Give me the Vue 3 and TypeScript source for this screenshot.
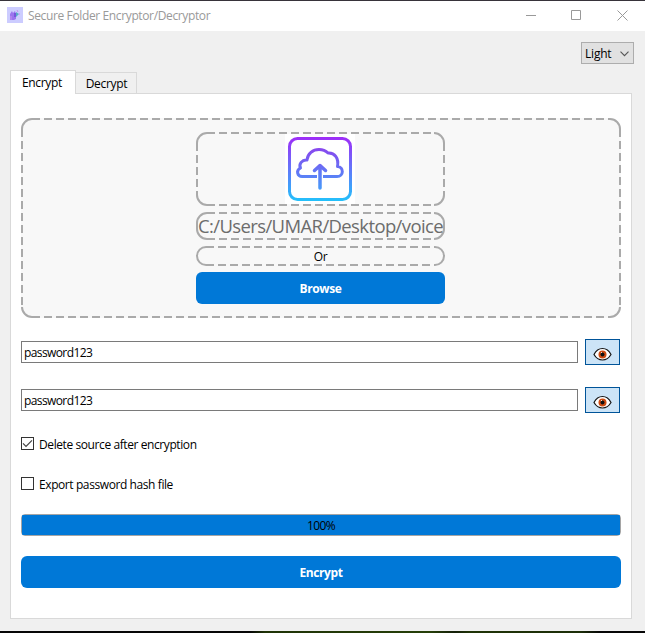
<script setup lang="ts">
import { computed, defineComponent, h, ref } from 'vue'

// Rounded outline whose straight edges are dashed 8/4 and whose corners stay solid.
const DashedOutline = defineComponent({
  props: {
    width: { type: Number, required: true },
    height: { type: Number, required: true },
  },
  setup(props) {
    return () => {
      const w = props.width
      const t = props.height
      const r = Math.min(10, t / 2 - 1)
      const edge = r + 1
      const lines = [
        `M${edge} 1H${w - edge}`,
        `M${edge} ${t - 1}H${w - edge}`,
        `M1 ${edge}V${t - edge}`,
        `M${w - 1} ${edge}V${t - edge}`,
      ]
      const corners =
        `M1 ${edge}A${r} ${r} 0 0 1 ${edge} 1` +
        `M${w - edge} 1A${r} ${r} 0 0 1 ${w - 1} ${edge}` +
        `M${w - 1} ${t - edge}A${r} ${r} 0 0 1 ${w - edge} ${t - 1}` +
        `M${edge} ${t - 1}A${r} ${r} 0 0 1 1 ${t - edge}`
      return h(
        'svg',
        { width: w, height: t, viewBox: `0 0 ${w} ${t}`, fill: 'none', stroke: '#aaaaaa', 'stroke-width': 2 },
        [
          h('path', { d: corners }),
          ...lines.map((d) => h('path', { d, 'stroke-dasharray': '8 4' })),
        ],
      )
    }
  },
})

const tab = ref<'encrypt' | 'decrypt'>('encrypt')
const passwords = ref<string[]>(['password123', 'password123'])
const visible = ref<boolean[]>([true, true])
const options = ref([
  { label: 'Delete source after encryption', checked: true },
  { label: 'Export password hash file', checked: false },
])
const progress = ref(100)
const progressStyle = computed(() => ({ width: `${progress.value}%` }))
</script>

<template>
  <div class="window">
    <header class="titlebar">
      <svg class="app-icon" width="16" height="16" viewBox="0 0 16 16">
        <rect width="16" height="16" fill="#ccccff" />
        <path d="M3 7l2-3 1 2 2-2 1 3v5l-2 1H4l-1-2z" fill="#9c74ee" />
        <path d="M3 9h2v4H3z" fill="#b183ee" />
        <path d="M7 6h2v4H7z" fill="#7658dc" />
        <path d="M9 5l3 2-3 3z" fill="#58aec4" />
        <path d="M10 3l1 2M12 7h1" stroke="#c194ec" />
      </svg>
      <span class="title">Secure Folder Encryptor/Decryptor</span>
      <div class="controls">
        <svg width="11" height="11" viewBox="0 0 11 11"><path d="M0 5.5h10" stroke="#999" /></svg>
        <svg width="11" height="11" viewBox="0 0 11 11"><path d="M.5 .5h9v9h-9z" fill="none" stroke="#999" /></svg>
        <svg width="11" height="11" viewBox="0 0 11 11"><path d="M.5 .5l10 10M10.5 .5l-10 10" fill="none" stroke="#999" /></svg>
      </div>
    </header>

    <div class="toolbar">
      <button class="theme" type="button">
        <span class="theme-label">Light</span>
        <svg width="9" height="6" viewBox="0 0 9 6"><path d="M.5 .7l4 4 4-4" fill="none" stroke="#555" stroke-width="1.1" /></svg>
      </button>
    </div>

    <nav class="tabs">
      <button type="button" class="tab" :class="{ active: tab === 'encrypt' }" @click="tab = 'encrypt'">Encrypt</button>
      <button type="button" class="tab" :class="{ active: tab === 'decrypt' }" @click="tab = 'decrypt'">Decrypt</button>
    </nav>

    <main class="panel">
      <section class="frame drop">
        <DashedOutline class="outline" :width="600" :height="200" />
        <div class="frame picture">
          <DashedOutline class="outline" :width="249" :height="74" />
          <svg class="upload" width="70" height="70" viewBox="0 0 70 70" fill="none">
            <defs>
              <linearGradient id="frameGrad" gradientUnits="userSpaceOnUse" x1="0" y1="3" x2="0" y2="67">
                <stop offset="0" stop-color="#9f2df8" />
                <stop offset="1" stop-color="#23c1fb" />
              </linearGradient>
              <linearGradient id="cloudGrad" gradientUnits="userSpaceOnUse" x1="0" y1="13" x2="0" y2="56">
                <stop offset="0" stop-color="#8a44ee" />
                <stop offset="1" stop-color="#459cfa" />
              </linearGradient>
            </defs>
            <rect width="70" height="70" fill="#fff" />
            <rect x="4.5" y="4.5" width="61" height="61" rx="8" stroke="url(#frameGrad)" stroke-width="3" />
            <g stroke="url(#cloudGrad)" stroke-width="3" stroke-linejoin="round">
              <path d="M32 42.500H17C12.500 42.500 10.500 36.500 15.500 34C13.500 30 17 25.500 22 26C22.500 19.500 28 15.500 34 15.500C38 15.500 41 17 43 19C49.500 18.500 54 24 52.500 32.500C59 33 59 42.500 52 42.500H38" />
              <path d="M35 54V31.500M29.500 36.500L35 31.500L40.500 36.500" stroke-width="3.500" stroke-linecap="round" />
            </g>
          </svg>
        </div>
        <div class="frame path">
          <DashedOutline class="outline" :width="249" :height="28" />
          <span class="path-text">C:/Users/UMAR/Desktop/voice</span>
        </div>
        <div class="frame or">
          <DashedOutline class="outline" :width="249" :height="20" />
          <span class="or-text">Or</span>
        </div>
        <button type="button" class="primary browse">Browse</button>
      </section>

      <div v-for="(_, i) in passwords" :key="i" class="field">
        <input v-model="passwords[i]" class="password" :type="visible[i] ? 'text' : 'password'" />
        <button type="button" class="eye" :class="{ on: visible[i] }" @click="visible[i] = !visible[i]">
          <svg width="19" height="15" viewBox="0 0 19 15">
            <path d="M1 7.500C3 3.500 6 1.500 9.500 1.500S16 3.500 18 7.500C16 11 13 13 9.500 13S3 11 1 7.500Z" fill="#fff" stroke="#151515" stroke-width="1.200" />
            <circle cx="9.500" cy="7.500" r="4" fill="#cf4c12" />
            <circle cx="9.500" cy="7.500" r="2" fill="#111" />
            <path d="M8 5.500h1" stroke="#ddd" />
          </svg>
        </button>
      </div>

      <label v-for="o in options" :key="o.label" class="option">
        <input v-model="o.checked" class="native" type="checkbox" />
        <svg width="13" height="13" viewBox="0 0 13 13" fill="none">
          <rect x=".5" y=".5" width="12" height="12" fill="#fff" stroke="#333" />
          <path v-if="o.checked" d="M2 6.300L5 9.300L11 3.300" stroke="#444" stroke-width="1.200" />
        </svg>
        <span class="option-text">{{ o.label }}</span>
      </label>

      <div class="progress">
        <div class="bar" :style="progressStyle"></div>
        <span class="percent">{{ progress }}%</span>
      </div>

      <button type="button" class="primary submit">Encrypt</button>
    </main>
    <div class="backdrop"></div>
  </div>
</template>

<style>
body {
  margin: 0;
  overflow: hidden;
}
</style>

<style scoped>
* {
  box-sizing: border-box;
}
.window {
  display: flex;
  flex-direction: column;
  width: 645px;
  height: 633px;
  background: #f0f0f0;
  border-top: 1px solid #37333a;
  font: 12px/16px "Open Sans", "Noto Sans", sans-serif;
  color: #000;
  white-space: nowrap;
}
.window > * {
  flex: none;
}
.backdrop {
  height: 2px;
  margin-top: auto;
  background: linear-gradient(to right, #060606 250px, #1f3306 265px, #263f08 430px, #141f08 455px, #1f3306 470px, #1c2e08 580px, #060606 600px);
}
svg {
  display: block;
  flex: none;
}
button {
  font: inherit;
  color: inherit;
  padding: 0;
  margin: 0;
}
.titlebar {
  display: flex;
  align-items: center;
  height: 30px;
  padding: 0 17px 0 7px;
  background: #fff;
}
.app-icon {
  margin-top: -2px;
}
.title {
  margin-left: 5px;
  color: #999;
  letter-spacing: -0.37px;
}
.controls {
  display: flex;
  gap: 34px;
  margin-left: auto;
  margin-top: -2px;
}
.controls svg:last-child {
  margin-left: 1px;
}
.toolbar {
  display: flex;
  justify-content: flex-end;
  height: 39px;
  padding: 11px 11px 0 0;
}
.theme {
  display: flex;
  align-items: center;
  justify-content: space-between;
  width: 53px;
  height: 22px;
  padding: 2px 4px 0 3px;
  border: 1px solid #adadad;
  background: #e1e1e1;
}
.theme-label {
  letter-spacing: -0.2px;
}
.tabs {
  display: flex;
  align-items: flex-end;
  height: 24px;
  padding-left: 10px;
  position: relative;
  z-index: 1;
}
.tab {
  width: 61px;
  height: 22px;
  padding: 2px 0 0 1px;
  border: 1px solid #d9d9d9;
  border-left: 0;
  background: #f0f0f0;
  letter-spacing: -0.3px;
}
.tab.active {
  width: 66px;
  height: 24px;
  padding: 0 2px 0 0;
  border-left: 1px solid #d9d9d9;
  border-bottom: 0;
  background: #fff;
}
.panel {
  width: 622px;
  height: 526px;
  margin: -1px 0 0 10px;
  padding: 24px 10px 0;
  border: 1px solid #d9d9d9;
  background: #fff;
}
.frame {
  display: flex;
  align-items: center;
  justify-content: center;
  position: relative;
  width: 249px;
}
.outline {
  position: absolute;
  left: 0;
  top: 0;
}
.drop {
  flex-direction: column;
  gap: 6px;
  width: 600px;
  height: 200px;
  margin-bottom: 21px;
  padding-right: 1px;
  border-radius: 11px;
  background: #f8f8f8;
}
.picture {
  height: 74px;
}
.upload {
  margin-right: 1px;
}
.path {
  height: 28px;
}
.path-text {
  position: relative;
  font-size: 18.500px;
  line-height: 26px;
  color: #6c6c6c;
  letter-spacing: -0.62px;
}
.or {
  height: 20px;
}
.or-text {
  position: relative;
  padding-top: 2px;
  letter-spacing: -0.3px;
}
.primary {
  display: block;
  border: 0;
  border-radius: 6px;
  background: #0078d7;
  color: #fff;
  font-weight: 700;
  letter-spacing: -0.4px;
}
.browse {
  width: 249px;
  height: 32px;
  padding-top: 2px;
}
.field {
  display: flex;
  align-items: center;
  justify-content: space-between;
  width: 599px;
  height: 26px;
  margin-bottom: 22px;
}
.password {
  width: 557px;
  height: 22px;
  padding: 1px 2px 0;
  border: 1px solid #7a7a7a;
  outline: 0;
  background: #fff;
  font: inherit;
  letter-spacing: -0.6px;
}
.eye {
  display: flex;
  align-items: center;
  justify-content: center;
  width: 35px;
  height: 26px;
  padding: 4px 0 0;
  border: 1px solid #adadad;
  background: #e1e1e1;
}
.eye.on {
  border-color: #005499;
  background: #cce4f7;
}
.option {
  display: flex;
  align-items: center;
  gap: 5px;
  height: 17px;
  margin-bottom: 23px;
}
.native {
  position: absolute;
  opacity: 0;
  pointer-events: none;
}
.option-text {
  padding-top: 2px;
  letter-spacing: -0.41px;
}
.progress {
  display: flex;
  justify-content: center;
  align-items: center;
  position: relative;
  width: 600px;
  height: 22px;
  margin: -1px 0 20px;
  border: 1px solid #a5a5a5;
  border-radius: 4px;
}
.bar {
  position: absolute;
  left: 0;
  top: 0;
  height: 100%;
  border-radius: 1px;
  background: #0078d7;
}
.percent {
  position: relative;
  padding-top: 1px;
  letter-spacing: -0.6px;
}
.submit {
  width: 600px;
  height: 32px;
  padding-top: 2px;
}
</style>
